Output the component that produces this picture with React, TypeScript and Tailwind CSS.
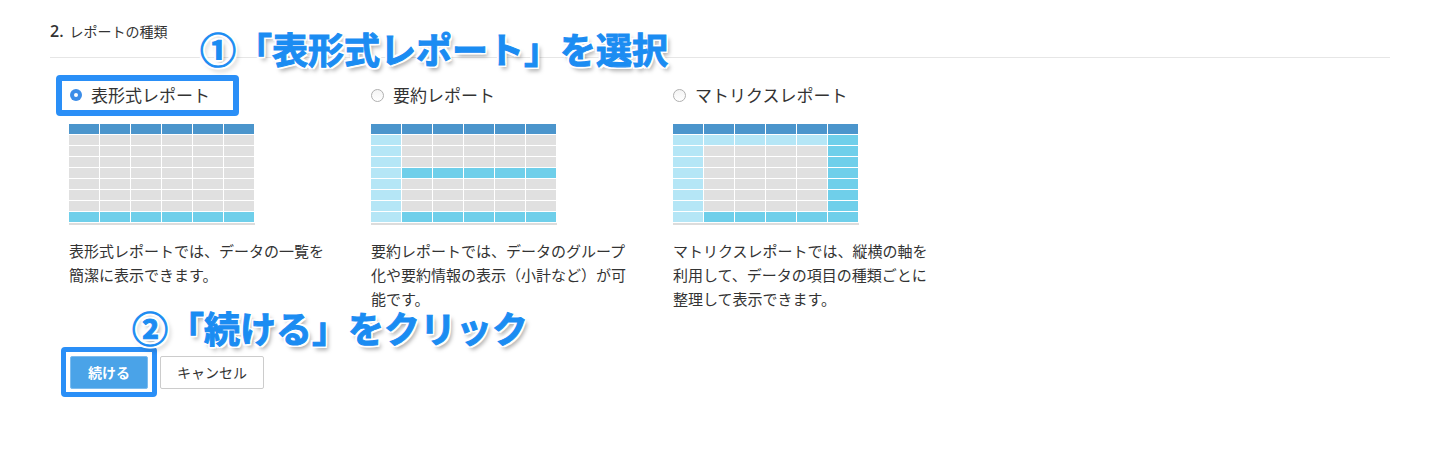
import React from "react";

const C: Record<string, string> = {
  H: "bg-[#4b95cc]",
  G: "bg-[#e0e0e0]",
  L: "bg-[#b5e6f6]",
  M: "bg-[#6fcfea]",
};

const t1 = ["HHHHHH", "GGGGGG", "GGGGGG", "GGGGGG", "GGGGGG", "GGGGGG", "GGGGGG", "GGGGGG", "MMMMMM"];
const t2 = ["HHHHHH", "LGGGGG", "LGGGGG", "LGGGGG", "LMMMMM", "LGGGGG", "LGGGGG", "LGGGGG", "LMMMMM"];
const t3 = ["HHHHHH", "LLLLLM", "LGGGGM", "LGGGGM", "LGGGGM", "LGGGGM", "LGGGGM", "LGGGGM", "LMMMMM"];

function Table({ rows }: { rows: string[] }) {
  return (
    <div className="w-[186px]">
      <div className="grid grid-cols-[repeat(6,30px)] gap-px">
        {rows.flatMap((r, i) =>
          r.split("").map((c, j) => <div key={i + "-" + j} className={"h-[10px] " + C[c]} />)
        )}
      </div>
      <div className="mt-px h-[2px] w-[186px] bg-[#dcdcdc]" />
    </div>
  );
}

function Option({
  label,
  rows,
  desc,
  selected,
}: {
  label: string;
  rows: string[];
  desc: string;
  selected?: boolean;
}) {
  return (
    <div className="w-[302px]">
      <div className="flex h-[24px] items-center">
        {selected ? (
          <span className="ml-[1px] flex h-[12px] w-[12px] items-center justify-center rounded-full bg-[#3b8de8]">
            <span className="h-[4px] w-[4px] rounded-full bg-white" />
          </span>
        ) : (
          <span className="h-[13px] w-[13px] rounded-full border border-[#b0b0b0] bg-gradient-to-b from-[#f4f4f4] to-white" />
        )}
        <span className="ml-[9px] text-[17px] leading-[24px] text-[#333]">{label}</span>
      </div>
      <div className="mt-[17px]">
        <Table rows={rows} />
      </div>
      <p className="mt-[14px] w-[262px] text-[15px] leading-[24px] text-[#333]">{desc}</p>
    </div>
  );
}

const shadow =
  "[-webkit-text-stroke:1px_#1b8cf2] [text-shadow:2px_0_0_#fff,-2px_0_0_#fff,0_2px_0_#fff,0_-2px_0_#fff,2px_2px_0_#fff,-2px_-2px_0_#fff,2px_-2px_0_#fff,-2px_2px_0_#fff,3px_4px_4px_rgba(0,0,0,0.35)]";

export default function App() {
  return (
    <div className="relative h-[449px] w-full overflow-hidden bg-white px-[50px] font-['Noto_Sans_CJK_JP',sans-serif] text-[#333]">
      <div className="mt-[21px] flex h-[20px] items-center">
        <span className="font-['Open_Sans',sans-serif] text-[16px] font-semibold">2.</span>
        <span className="ml-[6px] text-[14px]">レポートの種類</span>
      </div>
      <div className="mt-[16px] h-px w-[1340px] bg-[#e6e6e6]" />

      <div className="mt-[25px] flex items-start pl-[19px]">
        <Option
          selected
          label="表形式レポート"
          rows={t1}
          desc="表形式レポートでは、データの一覧を簡潔に表示できます。"
        />
        <Option
          label="要約レポート"
          rows={t2}
          desc="要約レポートでは、データのグループ化や要約情報の表示（小計など）が可能です。"
        />
        <Option
          label="マトリクスレポート"
          rows={t3}
          desc="マトリクスレポートでは、縦横の軸を利用して、データの項目の種類ごとに整理して表示できます。"
        />
      </div>

      <div className="mt-[45px] flex items-start pl-[20px]">
        <div className="relative">
          <button className="h-[33px] w-[78px] rounded-[2px] border border-[#7dbcef] bg-[#4aa3e8] text-[14px] font-bold text-white">
            続ける
          </button>
          <span className="pointer-events-none absolute -bottom-[8px] -left-[9px] -right-[9px] -top-[9px] rounded-[4px] border-[5px] border-[#2a8ff7]" />
        </div>
        <button className="ml-[12px] h-[33px] w-[104px] rounded-[2px] border border-[#cccccc] bg-white text-[14px] text-[#333]">
          キャンセル
        </button>
      </div>

      {/* highlight around first option */}
      <span className="pointer-events-none absolute left-[56px] top-[75px] h-[41px] w-[183px] rounded-[4px] border-[6px] border-[#2a8ff7]" />

      {/* annotations */}
      <div
        className={
          "absolute left-[200px] top-[30px] whitespace-nowrap text-[36px] font-bold leading-[36px] text-[#1b8cf2] " +
          shadow
        }
      >
        ①「表形式レポート」を選択
      </div>
      <div
        className={
          "absolute left-[132px] top-[309px] whitespace-nowrap text-[36px] font-bold leading-[36px] text-[#1b8cf2] " +
          shadow
        }
      >
        ②「続ける」をクリック
      </div>
    </div>
  );
}
